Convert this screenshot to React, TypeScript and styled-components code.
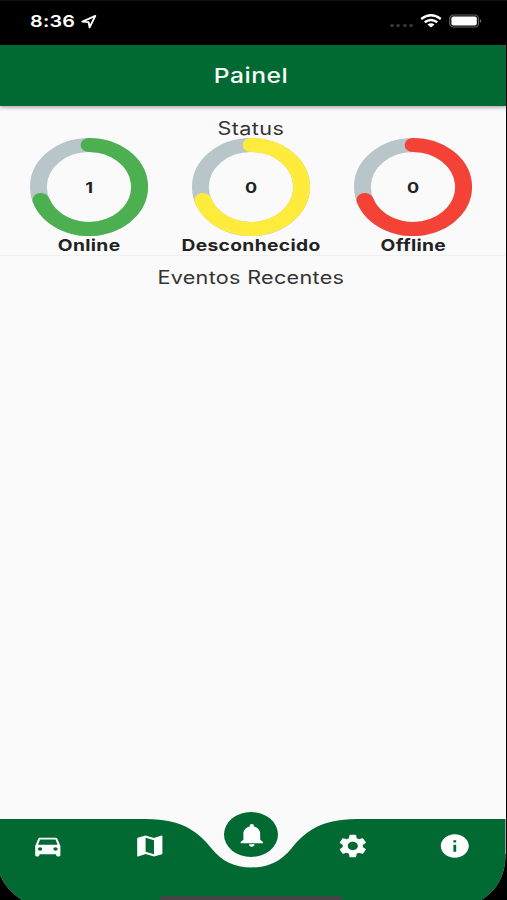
import React from "react";
import styled, { createGlobalStyle } from "styled-components";
import {
  MdDirectionsCar,
  MdInfo,
  MdMap,
  MdNotifications,
  MdSettings,
} from "react-icons/md";

const GREEN = "#016932";

const GlobalStyle = createGlobalStyle`
  body {
    margin: 0;
    background: #000;
    font-family: Inter, "Liberation Sans", sans-serif;
  }
  * { box-sizing: border-box; }
`;

const Screen = styled.div`
  width: 507px;
  height: 900px;
  display: flex;
  flex-direction: column;
  overflow: hidden;
  background: #000;
`;

const StatusBar = styled.header`
  height: 45px;
  flex: none;
  display: flex;
  justify-content: space-between;
  padding: 0 24px 4px 30px;
  align-items: center;
  border-top: 1px solid #101010;
`;

const StatusGroup = styled.div`
  display: flex;
  align-items: center;
`;

const Wide = styled.span<{
  $size: number;
  $weight?: number;
  $spacing?: number;
  $color?: string;
}>`
  display: block;
  font-size: ${(p) => p.$size}px;
  font-weight: ${(p) => p.$weight ?? 400};
  letter-spacing: ${(p) => p.$spacing ?? 0}px;
  color: ${(p) => p.$color ?? "#222"};
  line-height: 20px;
  white-space: nowrap;
  transform: scaleX(1.2);
`;

const Clock = styled(Wide)`
  transform-origin: left;
  width: 50px;
`;

const Dots = styled.div`
  display: flex;
  gap: 2.3px;
  margin: 9px 7px 0 0;
`;

const Dot = styled.i`
  width: 4px;
  height: 3px;
  border-radius: 50%;
  background: #3a3a3a;
`;

const BatteryIcon = styled.svg`
  margin-left: 7px;
`;

const Content = styled.main`
  flex: 1;
  min-height: 0;
  width: 505.5px;
  display: flex;
  flex-direction: column;
  background: #fafafa;
  border-radius: 0 2px 0 0;
`;

const TitleBar = styled.div`
  height: 61px;
  flex: none;
  display: flex;
  align-items: center;
  justify-content: center;
  padding: 1px 3px 0 0;
  background: ${GREEN};
  border-radius: 0 2px 0 0;
  box-shadow: 0 1px 4px rgba(40, 10, 30, 0.45);
`;

const Summary = styled.section`
  height: 150px;
  flex: none;
  display: flex;
  flex-direction: column;
  align-items: center;
  padding-top: 13px;
  border-bottom: 1px solid #f0f0f0;
`;

const SectionTitle = styled(Wide)`
  margin-right: 3px;
`;

const Gauges = styled.div`
  display: grid;
  grid-template-columns: repeat(3, 162px);
  width: 489px;
  margin-top: -1px;
`;

const Gauge = styled.div`
  display: flex;
  flex-direction: column;
  align-items: center;
`;

const Dial = styled.div`
  display: grid;
  width: 118px;
  height: 98px;
  place-items: center;
  > * { grid-area: 1 / 1; }
`;

const DialValue = styled(Wide)`
  padding-top: 2px;
`;

const GaugeLabel = styled.div`
  height: 20px;
  margin-top: -1px;
`;

const Events = styled.section`
  flex: 1;
  display: flex;
  justify-content: center;
  padding-top: 12px;
`;

const Nav = styled.nav`
  position: relative;
  height: 88px;
  flex: none;
`;

const NavShape = styled.svg`
  position: absolute;
  inset: 0;
  width: 507px;
  height: 88px;
`;

const NavItems = styled.div`
  position: relative;
  display: grid;
  grid-template-columns: repeat(5, 101.8px);
  justify-items: center;
  width: 509px;
  margin-left: -3px;
  padding-top: 20px;
  svg {
    width: 33.6px;
    height: 28px;
    color: #fff;
  }
`;

const NavButton = styled.a<{ $active?: boolean }>`
  display: flex;
  align-items: center;
  justify-content: center;
  width: 54px;
  height: 45px;
  margin-top: ${(p) => (p.$active ? -20 : -8.5)}px;
  border-radius: 50%;
  background: ${(p) => (p.$active ? GREEN : "transparent")};
`;

const gauges = [
  { label: "Online", value: 1, color: "#4caf50" },
  { label: "Desconhecido", value: 0, color: "#ffeb3b" },
  { label: "Offline", value: 0, color: "#f44336" },
];

const navIcons = [MdDirectionsCar, MdMap, MdNotifications, MdSettings, MdInfo];

function Ring({ color }: { color: string }) {
  return (
    <svg width="118" height="98" viewBox="0 0 98 98" preserveAspectRatio="none" fill="none" strokeWidth="14">
      <circle cx="49" cy="49" r="42" stroke="#b8c5c9" />
      <path d="M49 7A42 42 0 1 1 9.06 61.98" stroke={color} strokeLinecap="round" />
    </svg>
  );
}

function Location() {
  return (
    <svg width="18" height="15" viewBox="0 0 18 15" fill="none" stroke="#fff" strokeWidth="1.9" strokeLinejoin="round">
      <path d="M2.4 7.6 15.3 1.9 9.6 13.3 8.6 8.1Z" />
    </svg>
  );
}

function Wifi() {
  return (
    <svg width="22" height="14" viewBox="0 0 22 14" fill="none" stroke="#fff" strokeWidth="2.4">
      <path d="M1.2 5Q11-2.3 20.8 5M4.7 8.2Q11 3.6 17.3 8.2" />
      <path d="M7.5 10.5Q11 8 14.5 10.5L11 13.5Z" fill="#fff" stroke="none" />
    </svg>
  );
}

function Battery() {
  return (
    <BatteryIcon width="34" height="14" viewBox="0 0 34 14">
      <rect x="0.7" y="1" width="28.8" height="12" rx="3.6" fill="none" stroke="#666" strokeWidth="1.2" />
      <rect x="2.4" y="2.4" width="25.4" height="9.2" rx="1.8" fill="#fff" />
      <path d="M31 5Q33.4 7 31 9Z" fill="#777" />
    </BatteryIcon>
  );
}

export default function App() {
  return (
    <>
      <GlobalStyle />
      <Screen>
        <StatusBar>
          <StatusGroup>
            <Clock $size={16.5} $weight={600} $color="#fff" $spacing={0.2}>8:36</Clock>
            <Location />
          </StatusGroup>
          <StatusGroup>
            <Dots><Dot /><Dot /><Dot /><Dot /></Dots>
            <Wifi />
            <Battery />
          </StatusGroup>
        </StatusBar>
        <Content>
          <TitleBar>
            <Wide $size={20.5} $weight={550} $spacing={0.45} $color="#f6fff8">Painel</Wide>
          </TitleBar>
          <Summary>
            <SectionTitle $size={18} $spacing={0.35} $color="#333">Status</SectionTitle>
            <Gauges>
              {gauges.map((g) => (
                <Gauge key={g.label}>
                  <Dial>
                    <Ring color={g.color} />
                    <DialValue $size={15} $weight={700}>{g.value}</DialValue>
                  </Dial>
                  <GaugeLabel>
                    <Wide $size={16} $weight={700} $spacing={0.3}>{g.label}</Wide>
                  </GaugeLabel>
                </Gauge>
              ))}
            </Gauges>
          </Summary>
          <Events>
            <SectionTitle $size={18} $spacing={0.25} $color="#333">Eventos Recentes</SectionTitle>
          </Events>
          <Nav>
            <NavShape viewBox="0 0 507 88">
              <path
                d="M0 7H146C184 7 199 21 212 37C222 49 234 55.5 251.5 55.5C269 55.5 281 49 291 37C304 21 319 7 357 7H505.5V42C505.5 66 495 80 481 88H22Q7 79 0 63Z"
                fill={GREEN}
              />
              <path d="M0 63Q7 79 22 88H0ZM505.5 42C505.5 66 495 80 481 88H507V42Z" fill="#000" />
              <path d="M160 88V86Q160 84 163 84H339Q342 84 342 86V88Z" fill="#454545" />
            </NavShape>
            <NavItems>
              {navIcons.map((Icon, i) => (
                <NavButton key={i} $active={i === 2}>
                  <Icon preserveAspectRatio="none" />
                </NavButton>
              ))}
            </NavItems>
          </Nav>
        </Content>
      </Screen>
    </>
  );
}
